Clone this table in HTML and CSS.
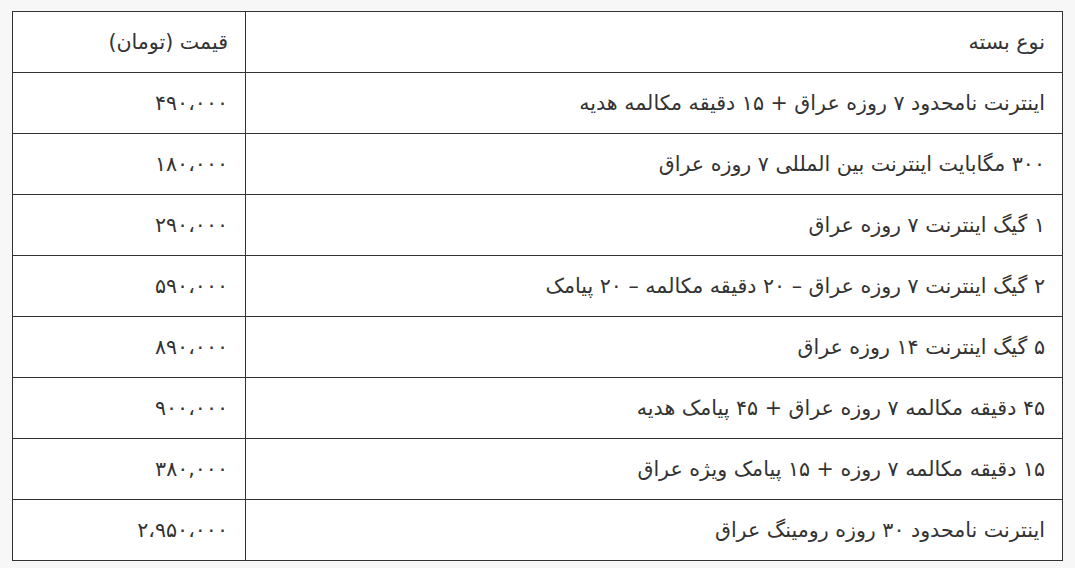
FILE: index.html
```html
<!DOCTYPE html>
<html lang="fa" dir="rtl">
<head>
<meta charset="utf-8">
<link rel="stylesheet" href="styles.css">
</head>
<body>
<div class="page">
<table class="plans">
<tr><td class="name">نوع بسته</td><td class="price">قیمت (تومان)</td></tr>
<tr><td class="name">اینترنت نامحدود ۷ روزه عراق + ۱۵ دقیقه مکالمه هدیه</td><td class="price">۴۹۰،۰۰۰</td></tr>
<tr><td class="name">۳۰۰ مگابایت اینترنت بین المللی ۷ روزه عراق</td><td class="price">۱۸۰،۰۰۰</td></tr>
<tr><td class="name">۱ گیگ اینترنت ۷ روزه عراق</td><td class="price">۲۹۰،۰۰۰</td></tr>
<tr><td class="name">۲ گیگ اینترنت ۷ روزه عراق – ۲۰ دقیقه مکالمه – ۲۰ پیامک</td><td class="price">۵۹۰،۰۰۰</td></tr>
<tr><td class="name">۵ گیگ اینترنت ۱۴ روزه عراق</td><td class="price">۸۹۰،۰۰۰</td></tr>
<tr><td class="name">۴۵ دقیقه مکالمه ۷ روزه عراق + ۴۵ پیامک هدیه</td><td class="price">۹۰۰،۰۰۰</td></tr>
<tr><td class="name">۱۵ دقیقه مکالمه ۷ روزه + ۱۵ پیامک ویژه عراق</td><td class="price">۳۸۰,۰۰۰</td></tr>
<tr><td class="name">اینترنت نامحدود ۳۰ روزه رومینگ عراق</td><td class="price">۲،۹۵۰،۰۰۰</td></tr>
</table>
</div>
</body>
</html>
```
FILE: styles.css
```css
html, body {
  margin: 0;
  padding: 0;
  background: #f7f7f7;
}
.page {
  padding: 11px 12px 0 12px;
  direction: rtl;
}
.plans {
  width: 1051px;
  border-collapse: collapse;
  background: #fff;
  font-family: "DejaVu Sans", sans-serif;
  font-size: 20.6px;
  color: #333;
}
.plans td {
  border: 1.5px solid #333;
  height: 60px;
  padding: 0 17px 0 16px;
  text-align: right;
  vertical-align: middle;
}
.plans .price {
  width: 199px;
}
```
